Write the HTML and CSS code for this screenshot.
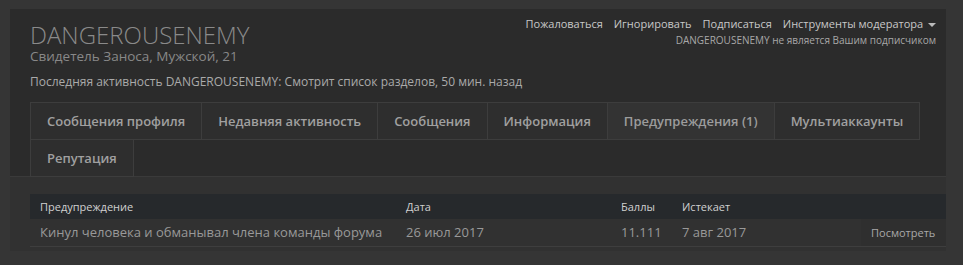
FILE: index.html
```html
<!doctype html>
<html>
<head>
	<meta charset="utf-8">
	<title>DANGEROUSENEMY</title>
	<link rel="stylesheet" href="styles.css">
</head>

<body>
	<div class="page">
		<div class="profile">
			<div class="head">
				<div class="who">
					<h1 class="name">DANGEROUSENEMY</h1>
					<div class="info">Свидетель Заноса, Мужской, 21</div>
				</div>
				<div class="actions">
					<div class="links">
						<a href="#">Пожаловаться</a>
						<a href="#">Игнорировать</a>
						<a href="#">Подписаться</a>
						<a href="#" class="menu">Инструменты модератора <span class="arrow"></span></a>
					</div>
					<div class="follow">DANGEROUSENEMY не является Вашим подписчиком</div>
				</div>
			</div>
			<div class="activity">Последняя активность DANGEROUSENEMY: Смотрит список разделов, 50 мин. назад</div>

			<ul class="tabs">
				<li class="tab">Сообщения профиля</li>
				<li class="tab">Недавняя активность</li>
				<li class="tab">Сообщения</li>
				<li class="tab">Информация</li>
				<li class="tab active">Предупреждения (1)</li>
				<li class="tab">Мультиаккаунты</li>
				<li class="tab">Репутация</li>
			</ul>
		</div>

		<div class="content">
			<div class="warnings">
				<div class="row head-row">
					<div class="cell">Предупреждение</div>
					<div class="cell">Дата</div>
					<div class="cell">Баллы</div>
					<div class="cell">Истекает</div>
					<div class="cell"></div>
				</div>
				<div class="row">
					<div class="cell">Кинул человека и обманывал члена команды форума</div>
					<div class="cell">26 июл 2017</div>
					<div class="cell">11.111</div>
					<div class="cell">7 авг 2017</div>
					<div class="cell view"><a href="#">Посмотреть</a></div>
				</div>
			</div>
		</div>
	</div>
</body>
</html>
```

FILE: styles.css
```css
html, body{
	margin: 0;
	padding: 0;
	background: #353535;
	font-family: "Open Sans", "Liberation Sans", sans-serif;
}
a{
	text-decoration: none;
}
.page{
	width: 936px;
	padding: 9px 0 0 10px;
}
.profile{
	background: #2b2b2b;
	padding: 13px 0 0 20px;
}
.head{
	display: flex;
	justify-content: space-between;
	padding-right: 10px;
}
.name{
	margin: 0;
	font-size: 24px;
	font-weight: 300;
	line-height: 26px;
	color: #8a8a8a;
}
.info{
	font-size: 13.5px;
	line-height: 16px;
	color: #888;
}
.actions{
	text-align: right;
	margin-top: -7px;
}
.links{
	display: flex;
	gap: 11px;
	font-size: 11px;
	line-height: 18px;
}
.links a{
	color: #c8c8c8;
}
.arrow{
	display: inline-block;
	width: 0;
	height: 0;
	margin-left: 2px;
	vertical-align: middle;
	border-left: 4px solid transparent;
	border-right: 4px solid transparent;
	border-top: 4px solid #bbb;
}
.follow{
	font-size: 10px;
	line-height: 14px;
	color: #a8a8a8;
}
.activity{
	margin-top: 10px;
	font-size: 12px;
	line-height: 16px;
	color: #aaa;
}
.tabs{
	list-style: none;
	margin: 12px 0 0;
	padding: 0;
	display: flex;
	flex-wrap: wrap;
	width: 892px;
}
.tab{
	height: 36px;
	line-height: 36px;
	padding: 0 16px;
	font-size: 13px;
	font-weight: 600;
	color: #a0a0a0;
	background: #2e2e2e;
	border: 1px solid #3d3d3d;
	margin: 0 -1px -1px 0;
}
.tab.active{
	background: #333;
	color: #9c9c9c;
}
.content{
	background: #313131;
	border-top: 1px solid #3a3a3a;
	padding: 17px 0 4px 20px;
}
.row{
	display: grid;
	grid-template-columns: 366px 215px 61px 1fr 85px;
	border-bottom: 1px solid #3e3e3e;
}
.cell{
	padding: 0 10px;
	font-size: 13px;
	line-height: 27px;
	color: #999;
	white-space: nowrap;
}
.head-row{
	background: #26292c;
	border-bottom: none;
}
.head-row .cell{
	font-size: 11px;
	line-height: 25px;
	color: #d0d0d0;
}
.view{
	background: #2f2f2f;
	font-size: 11px;
	text-align: right;
	padding-right: 11px;
}
.view a{
	color: #a8a8a8;
}
```
